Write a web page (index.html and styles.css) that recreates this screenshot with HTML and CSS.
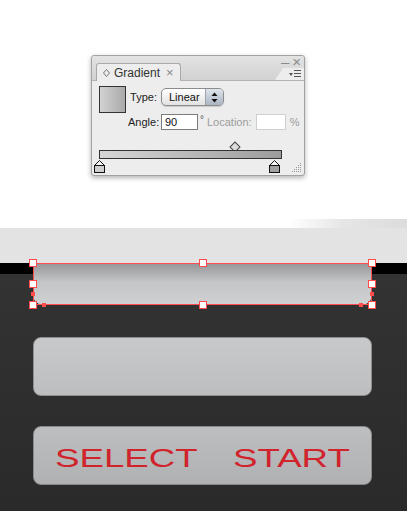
FILE: index.html
```html
<!DOCTYPE html>
<html lang="en">
<head>
    <meta charset="UTF-8">
    <meta name="viewport" content="width=device-width, initial-scale=1.0">
    <title>Gradient</title>
    <link rel="stylesheet" href="styles.css">
</head>
<body>
    <div class="desk">
        <div class="panel">
            <div class="panel-head">
                <div class="tab">
                    <svg class="tab-icon" width="7" height="8" viewBox="0 0 7 8"><polygon points="3.5,0.5 6.5,4 3.5,7.5 0.5,4" fill="none" stroke="#777" stroke-width="1"/></svg>
                    <span>Gradient</span>
                    <span class="tab-close">×</span>
                </div>
                <div class="head-right">
                    <div class="win-btns"><span class="min">–</span><span class="close">×</span></div>
                    <div class="menu-tab">
                        <svg width="12" height="8" viewBox="0 0 12 8">
                            <polygon points="0,3 4,3 2,6" fill="#555"/>
                            <rect x="5" y="0" width="7" height="1" fill="#555"/>
                            <rect x="5" y="3" width="7" height="1" fill="#555"/>
                            <rect x="5" y="6" width="7" height="1" fill="#555"/>
                        </svg>
                    </div>
                </div>
            </div>
            <div class="panel-body">
                <div class="row-top">
                    <div class="swatch"></div>
                    <div class="fields">
                        <label class="lbl">Type:</label>
                        <div class="select">
                            <span class="select-text">Linear</span>
                            <span class="spin">
                                <svg width="7" height="11" viewBox="0 0 7 11"><polygon points="3.5,0.5 6.5,4 0.5,4" fill="#111"/><polygon points="0.5,7 6.5,7 3.5,10.5" fill="#111"/></svg>
                            </span>
                        </div>
                        <label class="lbl">Angle:</label>
                        <div class="angle-row">
                            <input class="angle-input" type="text" value="90">
                            <span class="deg">°</span>
                            <span class="dim">Location:</span>
                            <input class="loc-input" type="text" disabled>
                            <span class="dim pct">%</span>
                        </div>
                    </div>
                </div>
                <div class="slider">
                    <div class="midpoint" style="left: 74%"></div>
                    <div class="ramp"></div>
                    <svg class="stop" style="left: 0%" width="11" height="13" viewBox="0 0 11 13">
                        <polygon points="5.5,0.5 10.5,5.5 0.5,5.5" fill="#f2f2f2" stroke="#111"/>
                        <rect x="0.5" y="5.5" width="10" height="7" fill="#cfcfcf" stroke="#111"/>
                    </svg>
                    <svg class="stop" style="left: 95.5%" width="11" height="13" viewBox="0 0 11 13">
                        <polygon points="5.5,0.5 10.5,5.5 0.5,5.5" fill="#f2f2f2" stroke="#111"/>
                        <rect x="0.5" y="5.5" width="10" height="7" fill="#a0a0a0" stroke="#111"/>
                    </svg>
                </div>
            </div>
            <svg class="grip" width="10" height="10" viewBox="0 0 10 10">
                <g fill="#9a9a9a">
                    <rect x="8" y="0" width="1" height="1"/>
                    <rect x="6" y="2" width="1" height="1"/><rect x="8" y="2" width="1" height="1"/>
                    <rect x="4" y="4" width="1" height="1"/><rect x="6" y="4" width="1" height="1"/><rect x="8" y="4" width="1" height="1"/>
                    <rect x="2" y="6" width="1" height="1"/><rect x="4" y="6" width="1" height="1"/><rect x="6" y="6" width="1" height="1"/><rect x="8" y="6" width="1" height="1"/>
                    <rect x="0" y="8" width="1" height="1"/><rect x="2" y="8" width="1" height="1"/><rect x="4" y="8" width="1" height="1"/><rect x="6" y="8" width="1" height="1"/><rect x="8" y="8" width="1" height="1"/>
                </g>
            </svg>
        </div>
    </div>

    <div class="band-fade"></div>
    <div class="band"></div>

    <div class="stage">
        <div class="pad pad-selected">
            <div class="sel-frame"></div>
            <span class="handle h-tl"></span>
            <span class="handle h-tc"></span>
            <span class="handle h-tr"></span>
            <span class="handle h-ml"></span>
            <span class="handle h-mr"></span>
            <span class="handle h-bl"></span>
            <span class="handle h-bc"></span>
            <span class="handle h-br"></span>
            <span class="knob k-l1"></span>
            <span class="knob k-l2"></span>
            <span class="knob k-r1"></span>
            <span class="knob k-r2"></span>
        </div>
        <div class="pad pad-plain"></div>
        <div class="pad pad-buttons">
            <span class="word word-left">SELECT</span>
            <span class="word word-right">START</span>
        </div>
    </div>
</body>
</html>
```

FILE: styles.css
```css
body {
    margin: 0;
    width: 407px;
    height: 511px;
    overflow: hidden;
    background-color: #ffffff;
    font-family: "Liberation Sans", Arial, sans-serif;
}

/* floating panel area */
.desk {
    height: 219px;
    padding-top: 55px;
    box-sizing: border-box;
}

.panel {
    position: relative;
    margin-left: 91px;
    width: 214px;
    height: 121px;
    box-sizing: border-box;
    border: 1px solid #a2a2a2;
    border-radius: 3px;
    background-color: #ededed;
    box-shadow: 0 2px 5px rgba(0, 0, 0, 0.3);
    font-size: 11px;
    color: #222;
}

.panel-head {
    display: flex;
    height: 24px;
    background: linear-gradient(#e3e3e3, #d2d2d2);
    border-bottom: 1px solid #b4b4b4;
    border-radius: 3px 3px 0 0;
}

.tab {
    display: flex;
    align-items: center;
    gap: 4px;
    margin: 7px 0 -1px 4px;
    padding: 0 6px;
    height: 17px;
    border: 1px solid #a9a9a9;
    border-bottom: none;
    border-radius: 3px 3px 0 0;
    background-color: #ededed;
    font-size: 12px;
    color: #333;
}

.tab-close {
    color: #888;
    font-size: 13px;
    margin-left: 2px;
}

.head-right {
    margin-left: auto;
    width: 31px;
    display: flex;
    flex-direction: column;
    align-items: flex-end;
}

.win-btns {
    height: 12px;
    display: flex;
    align-items: center;
    gap: 3px;
    padding-right: 3px;
    color: #8a8a8a;
    font-size: 15px;
    line-height: 12px;
}

.menu-tab {
    width: 29px;
    height: 12px;
    margin-bottom: -1px;
    display: flex;
    justify-content: flex-end;
    align-items: center;
    padding-right: 3px;
    box-sizing: border-box;
    background-color: #ededed;
    clip-path: polygon(8px 0, 100% 0, 100% 100%, 0 100%);
}

.panel-body {
    padding: 5px 0 0 7px;
}

.row-top {
    display: flex;
}

.swatch {
    width: 25px;
    height: 25px;
    border: 1px solid #333;
    background: linear-gradient(to right, #d2d2d2, #a9a9a9);
}

.fields {
    display: grid;
    grid-template-columns: 29px auto;
    column-gap: 4px;
    row-gap: 8px;
    align-items: center;
    margin: 2px 0 0 2px;
}

.lbl {
    text-align: right;
    color: #222;
}

.select {
    display: flex;
    width: 63px;
    height: 18px;
    box-sizing: border-box;
    border: 1px solid #8c8c8c;
    border-radius: 5px;
    background: linear-gradient(#ffffff, #e2e2e2);
    overflow: hidden;
    box-shadow: 0 1px 1px rgba(0, 0, 0, 0.15);
}

.select-text {
    flex: 1;
    padding-left: 7px;
    line-height: 16px;
    font-size: 11px;
    color: #111;
}

.spin {
    width: 17px;
    display: flex;
    align-items: center;
    justify-content: center;
    border-left: 1px solid #9aa3ad;
    background: linear-gradient(#dfe5ec, #a9b5c2);
}

.angle-row {
    display: flex;
    align-items: center;
}

.angle-input {
    width: 37px;
    height: 16px;
    box-sizing: border-box;
    padding: 0 3px;
    border: 1px solid #7c7c7c;
    font-family: "Liberation Sans", Arial, sans-serif;
    font-size: 11px;
    color: #111;
    background: #fff;
}

.deg {
    margin: 0 3px 0 2px;
    color: #555;
    font-size: 10px;
    align-self: flex-start;
}

.dim {
    color: #9c9c9c;
}

.loc-input {
    width: 30px;
    height: 16px;
    box-sizing: border-box;
    margin-left: 4px;
    border: 1px solid #cfcfcf;
    background: #fff;
}

.pct {
    margin-left: 4px;
}

/* gradient ramp */
.slider {
    position: relative;
    width: 183px;
    height: 30px;
    margin-top: 13px;
}

.midpoint {
    position: absolute;
    top: 0;
    width: 6px;
    height: 6px;
    margin-left: -3px;
    border: 1px solid #444;
    background: #ddd;
    transform: rotate(45deg);
}

.ramp {
    position: absolute;
    top: 7px;
    left: 0;
    right: 0;
    height: 7px;
    border: 1px solid #333;
    background: linear-gradient(to right, #d6d6d6, #9c9c9c);
}

.stop {
    position: absolute;
    top: 17px;
    margin-left: -5px;
}

.grip {
    position: absolute;
    right: 2px;
    bottom: 2px;
}

/* page bands */
.band-fade {
    height: 9px;
    background: linear-gradient(to right, #ffffff 71%, #e6e6e6 84%, #dcdcdc);
}

.band {
    height: 35px;
    background-color: #e3e3e3;
}

.stage {
    height: 248px;
    box-sizing: border-box;
    padding: 0 35px 0 33px;
    display: flex;
    flex-direction: column;
    background: linear-gradient(#000 0, #000 11px, #333 11px, #2a2a2a 100%);
}

.pad {
    box-sizing: border-box;
    border-radius: 8px;
}

.pad-selected {
    position: relative;
    height: 42px;
    border-radius: 0 0 10px 10px;
    background: linear-gradient(#959597, #c4c5c7 45%, #d0d1d3);
}

.sel-frame {
    position: absolute;
    inset: 0;
    border: 1px solid #ff4d4d;
}

.handle {
    position: absolute;
    width: 6px;
    height: 6px;
    border: 1px solid #ff4d4d;
    background: #fff;
    transform: translate(-50%, -50%);
}

.h-tl { left: 0; top: 0; }
.h-tc { left: 50%; top: 0; }
.h-tr { left: 100%; top: 0; }
.h-ml { left: 0; top: 50%; }
.h-mr { left: 100%; top: 50%; }
.h-bl { left: 0; top: 100%; }
.h-bc { left: 50%; top: 100%; }
.h-br { left: 100%; top: 100%; }

.knob {
    position: absolute;
    width: 4px;
    height: 4px;
    background: #ff4d4d;
    transform: translate(-50%, -50%);
}

.k-l1 { left: 0; top: 31px; }
.k-l2 { left: 11px; top: 100%; }
.k-r1 { left: 100%; top: 31px; }
.k-r2 { left: calc(100% - 11px); top: 100%; }

.pad-plain {
    height: 59px;
    margin-top: 32px;
    border: 1px solid #8e8f91;
    background: linear-gradient(#c8c9cb, #bdbec0);
}

.pad-buttons {
    height: 59px;
    margin-top: 30px;
    padding: 6px 21px 0;
    display: flex;
    justify-content: space-between;
    align-items: center;
    border: 1px solid #88898b;
    background: linear-gradient(#bdbec0, #b0b1b3);
    color: #d1232b;
    font-size: 26px;
}

.word {
    display: inline-block;
    transform: scaleX(1.41);
}

.word-left {
    transform-origin: left center;
}

.word-right {
    transform-origin: right center;
}
```
